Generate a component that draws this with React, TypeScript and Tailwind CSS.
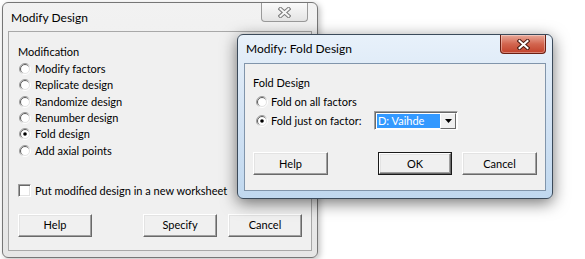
import type { ReactNode } from "react";

const Radio = ({ checked }: { checked?: boolean }) => (
  <svg width="12" height="12" viewBox="0 0 12 12" className="shrink-0">
    <defs>
      <linearGradient id="rOuter" x1="0" y1="0" x2="1" y2="1">
        <stop offset="0.35" stopColor="#9a9a9a" />
        <stop offset="0.65" stopColor="#ffffff" />
      </linearGradient>
      <linearGradient id="rInner" x1="0" y1="0" x2="1" y2="1">
        <stop offset="0.35" stopColor="#5a5a5a" />
        <stop offset="0.65" stopColor="#e3e3e3" />
      </linearGradient>
    </defs>
    <circle cx="6" cy="6" r="5.5" fill="none" stroke="url(#rOuter)" strokeWidth="1" />
    <circle cx="6" cy="6" r="4.5" fill="#ffffff" stroke="url(#rInner)" strokeWidth="1" />
    {checked && <circle cx="6" cy="6" r="1.8" fill="#000000" />}
  </svg>
);

const CloseX = ({ fill, outline }: { fill: string; outline: string }) => (
  <svg width="13" height="11" viewBox="0 0 13 11">
    <path d="M2.5 2 L10.5 9 M10.5 2 L2.5 9" stroke={outline} strokeWidth="4" strokeLinecap="square" />
    <path d="M2.5 2 L10.5 9 M10.5 2 L2.5 9" stroke={fill} strokeWidth="2" strokeLinecap="square" />
  </svg>
);

const Btn = ({ children, def, w }: { children: ReactNode; def?: boolean; w: string }) => (
  <div className={`${w} h-[23px] ${def ? "border border-[#1a1a1a]" : ""}`}>
    <div className="h-full w-full flex items-center justify-center bg-[#f0f0f0] border border-t-white border-l-white border-b-[#696969] border-r-[#696969] shadow-[inset_-1px_-1px_#a0a0a0,inset_1px_1px_#e3e3e3]">
      {children}
    </div>
  </div>
);

const RadioRow = ({ label, checked, gap }: { label: string; checked?: boolean; gap: string }) => (
  <div className={`flex items-center h-[16.33px] ${gap}`}>
    <Radio checked={checked} />
    <span>{label}</span>
  </div>
);

export default function App() {
  return (
    <div className="relative w-[585px] h-[259px] bg-white overflow-hidden text-[11px] leading-[16px] text-black font-['Lato','Noto_Sans',sans-serif]">
      {/* Modify Design (inactive) */}
      <div className="absolute left-[2px] top-[2px] w-[316px] h-[256px] flex flex-col border border-[#767676] rounded-[6px] bg-gradient-to-b from-[#f2f2f2] to-[#e6e6e6] px-[5px] pb-[6px] shadow-[2px_2px_6px_rgba(0,0,0,0.25)]">
        <div className="h-[28px] flex items-start justify-between">
          <span className="pl-[3px] pt-[7px] text-[12px]">Modify Design</span>
          <div className="mr-[4px] w-[47px] h-[19px] flex items-center justify-center rounded-b-[4px] border border-t-0 border-[#9a9a9a] bg-gradient-to-b from-[#fafafa] to-[#e4e4e4]">
            <CloseX fill="#f6f6f6" outline="#7a7a7a" />
          </div>
        </div>
        <div className="flex-1 border border-[#a8a8a8] bg-[#f0f0f0] pt-[12px] pl-[9px] pr-[9px]">
          <div>Modification</div>
          <div className="mt-[1px] pl-[1px]">
            <RadioRow label="Modify factors" gap="gap-[4px]" />
            <RadioRow label="Replicate design" gap="gap-[4px]" />
            <RadioRow label="Randomize design" gap="gap-[4px]" />
            <RadioRow label="Renumber design" gap="gap-[4px]" />
            <RadioRow label="Fold design" gap="gap-[4px]" checked />
            <RadioRow label="Add axial points" gap="gap-[4px]" />
          </div>
          <div className="mt-[24px] flex items-center h-[16px] gap-[4px]">
            <div className="w-[13px] h-[13px] border border-t-[#a0a0a0] border-l-[#a0a0a0] border-b-white border-r-white shadow-[inset_1px_1px_#696969,inset_-1px_-1px_#e3e3e3] bg-white" />
            <span>Put modified design in a new worksheet</span>
          </div>
          <div className="mt-[15px] flex">
            <Btn w="w-[74px]">Help</Btn>
            <div className="ml-auto">
              <Btn w="w-[74px]">Specify</Btn>
            </div>
            <div className="ml-[11px]">
              <Btn w="w-[74px]">Cancel</Btn>
            </div>
          </div>
        </div>
      </div>

      {/* Modify: Fold Design (active) */}
      <div className="absolute left-[237px] top-[34px] w-[316px] h-[165px] flex flex-col border border-[#3b4a5a] rounded-[6px] bg-gradient-to-b from-[#e8f1fa] via-[#d3e3f4] to-[#c0d8ef] px-[6px] pb-[7px] shadow-[0_4px_16px_rgba(0,0,0,0.55)]">
        <div className="h-[28px] flex items-start justify-between">
          <span className="pl-[2px] pt-[6px] text-[12px]">Modify: Fold Design</span>
          <div className="w-[46px] h-[19px] flex items-center justify-center rounded-b-[4px] border border-t-0 border-[#6b1f12] bg-gradient-to-b from-[#e8a899] via-[#d2654f] to-[#c2412a] shadow-[inset_0_0_0_1px_rgba(255,255,255,0.35)]">
            <CloseX fill="#ffffff" outline="#4a1a12" />
          </div>
        </div>
        <div className="flex-1 border border-[#8195ab] bg-[#f0f0f0] pt-[11px] pl-[8px] pr-[8px]">
          <div>Fold Design</div>
          <div className="mt-[3px] pl-[3px]">
            <RadioRow label="Fold on all factors" gap="gap-[3px]" />
            <div className="mt-[1px] h-[19px] flex items-center">
              <div className="w-[118px] shrink-0 flex items-center gap-[3px]">
                <Radio checked />
                <span>Fold just on factor:</span>
              </div>
              <div className="w-[84px] h-[19px] flex items-center border border-t-[#a0a0a0] border-l-[#a0a0a0] border-b-white border-r-white shadow-[inset_1px_1px_#696969] bg-white pl-[2px] pr-[1px]">
                <div className="flex-1 h-[14px] bg-[#3399ff] text-white flex items-center pl-[1px]">D: Vaihde</div>
                <div className="w-[16px] h-[16px] flex items-center justify-center bg-[#f0f0f0] border border-t-white border-l-white border-b-[#696969] border-r-[#696969]">
                  <svg width="7" height="4" viewBox="0 0 7 4">
                    <path d="M0 0 H7 L3.5 4 Z" fill="#000" />
                  </svg>
                </div>
              </div>
            </div>
          </div>
          <div className="mt-[22px] flex">
            <Btn w="w-[75px]">Help</Btn>
            <div className="ml-auto">
              <Btn w="w-[74px]" def>OK</Btn>
            </div>
            <div className="ml-[10px]">
              <Btn w="w-[75px]">Cancel</Btn>
            </div>
          </div>
        </div>
      </div>
    </div>
  );
}
